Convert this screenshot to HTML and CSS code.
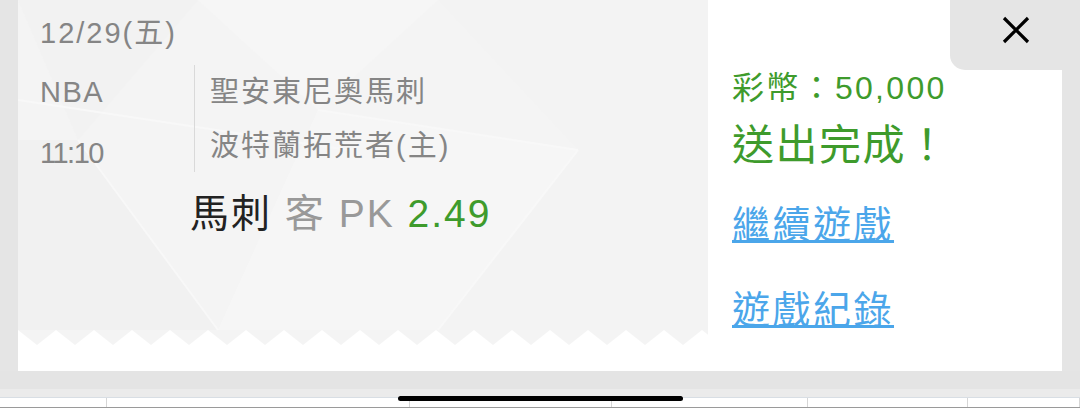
FILE: index.html
```html
<html>
<head>
    <meta name="viewport" content="width=device-width, initial-scale=1.0">
    <title>投注完成</title>
    <link rel="stylesheet" href="styles.css">
</head>
<body>
<div class="screen">
    <div class="card">
        <div class="ticket">
            <svg class="ticket-bg" width="690" height="371" viewBox="0 0 690 371">
                <polygon points="0,0 180,0 60,140" fill="#f2f2f2"/>
                <polygon points="180,0 420,0 300,110" fill="#f6f6f6"/>
                <polygon points="420,0 690,0 690,90 560,150" fill="#f3f3f3"/>
                <polygon points="0,140 60,140 200,330 0,330" fill="#f1f1f1"/>
                <polygon points="300,110 560,150 420,330 200,330" fill="#f6f6f6"/>
                <polygon points="560,150 690,90 690,330 420,330" fill="#f3f3f3"/>
                <line x1="60" y1="140" x2="200" y2="330" stroke="#f8f8f8" stroke-width="2"/>
                <line x1="300" y1="110" x2="560" y2="150" stroke="#f8f8f8" stroke-width="2"/>
                <line x1="560" y1="150" x2="420" y2="330" stroke="#f8f8f8" stroke-width="2"/>
                <line x1="0" y1="100" x2="330" y2="150" stroke="#f8f8f8" stroke-width="2"/>
            </svg>
            <div class="date">12/29(五)</div>
            <div class="match">
                <div class="meta">
                    <span>NBA</span>
                    <span class="time">11:10</span>
                </div>
                <div class="teams">
                    <span>聖安東尼奧馬刺</span>
                    <span>波特蘭拓荒者(主)</span>
                </div>
            </div>
            <div class="pick">
                <span class="pick-team">馬刺</span>
                <span class="pick-type">客 PK</span>
                <span class="pick-odds">2.49</span>
            </div>
            <div class="ticket-edge">
                <svg width="690" height="15">
                    <defs>
                        <pattern id="zig" width="38" height="15" patternUnits="userSpaceOnUse">
                            <polygon points="0,0 19,15 38,0 38,15 0,15" fill="#fff"/>
                        </pattern>
                    </defs>
                    <rect width="690" height="15" fill="url(#zig)"/>
                </svg>
                <div class="edge-fill"></div>
            </div>
        </div>
        <div class="result">
            <div class="coins">彩幣：50,000</div>
            <div class="done">送出完成！</div>
            <a class="link link-first" href="#">繼續遊戲</a>
            <a class="link" href="#">遊戲紀錄</a>
        </div>
    </div>
    <div class="page-below">
        <div class="shade"></div>
        <div class="shade-light"></div>
        <div class="table-row">
            <div class="cell" style="width: 107px"></div>
            <div class="cell" style="width: 303px"></div>
            <div class="cell" style="width: 202px"></div>
            <div class="cell" style="width: 196px"></div>
            <div class="cell" style="width: 160px"></div>
            <div class="cell" style="width: 112px"></div>
        </div>
    </div>
    <button class="close" aria-label="關閉">
        <svg width="28" height="28" viewBox="0 0 28 28">
            <path d="M2 2 L26 26 M26 2 L2 26" stroke="#000" stroke-width="3.2" fill="none"/>
        </svg>
    </button>
    <div class="home-bar"></div>
</div>
</body>
</html>
```

FILE: styles.css
```css
/* Page */
body {
    margin: 0;
    font-family: "Liberation Sans", "Noto Sans CJK TC", sans-serif;
    background: #e5e5e5;
}
.screen {
    position: relative;
    width: 1080px;
    height: 408px;
    overflow: hidden;
}
/* Card */
.card {
    display: flex;
    margin-left: 18px;
    width: 1044px;
    height: 371px;
    background: #fff;
}
/* Left ticket */
.ticket {
    position: relative;
    display: flex;
    flex-direction: column;
    width: 690px;
    padding-left: 22px;
    box-sizing: border-box;
    background: #f4f4f4;
    color: #858585;
}
.ticket-bg {
    position: absolute;
    left: 0;
    top: 0;
}
.ticket > div {
    position: relative;
}
.date {
    margin-top: 13px;
    font-size: 29px;
    line-height: 40px;
    letter-spacing: 2px;
}
.match {
    display: flex;
    margin-top: 12px;
}
.meta {
    display: flex;
    flex-direction: column;
    gap: 7px;
    width: 154px;
    font-size: 29px;
    line-height: 54px;
    letter-spacing: 1.5px;
}
.meta .time {
    letter-spacing: -1.5px;
}
.teams {
    display: flex;
    flex-direction: column;
    height: 107px;
    padding-left: 15px;
    border-left: 1px solid #d9d9d9;
    font-size: 29px;
    line-height: 54px;
    letter-spacing: 2px;
}
.pick {
    margin-top: 9px;
    padding-left: 150px;
    font-size: 39px;
    line-height: 50px;
    letter-spacing: 2px;
}
.pick-team {
    color: #222;
}
.pick-type {
    color: #999;
}
.pick-odds {
    color: #3e9b2c;
}
.ticket-edge {
    margin-top: auto;
    margin-left: -22px;
}
.ticket-edge svg {
    display: block;
}
.edge-fill {
    height: 26px;
    background: #fff;
}
/* Right result panel */
.result {
    display: flex;
    flex-direction: column;
    align-items: flex-start;
    flex: 1;
    padding: 66px 0 0 24px;
}
.coins {
    color: #3e9b2c;
    font-size: 32px;
    line-height: 44px;
    letter-spacing: 2.3px;
}
.done {
    margin-top: 8px;
    color: #3e9b2c;
    font-size: 42px;
    line-height: 56px;
    letter-spacing: 1.5px;
}
.link {
    margin-top: 35px;
    color: #4ba6ea;
    font-size: 38px;
    line-height: 50px;
    letter-spacing: 2.5px;
    text-decoration: underline;
    text-decoration-thickness: 3px;
    text-underline-offset: 2px;
}
.link-first {
    margin-top: 26px;
}
/* Close button */
.close {
    position: absolute;
    right: 0;
    top: 0;
    width: 130px;
    height: 70px;
    padding: 0;
    border: none;
    border-bottom-left-radius: 15px;
    background: #e5e5e5;
    display: flex;
    justify-content: center;
    align-items: center;
    padding-bottom: 10px;
    padding-left: 2px;
}
/* Page behind the dialog */
.page-below {
    display: flex;
    flex-direction: column;
}
.shade {
    height: 18px;
    background: #e4e4e4;
}
.shade-light {
    height: 8px;
    background: #ebebeb;
}
.table-row {
    display: flex;
    height: 9px;
    border-top: 1px solid #d8dee4;
    border-bottom: 1px solid #9a9a9a;
    background: #fff;
}
.cell {
    box-sizing: border-box;
    border-right: 1px solid #d6d6d6;
}
/* iOS home indicator */
.home-bar {
    position: absolute;
    left: 398px;
    top: 396px;
    width: 285px;
    height: 5px;
    border-radius: 3px;
    background: #000;
}
```
